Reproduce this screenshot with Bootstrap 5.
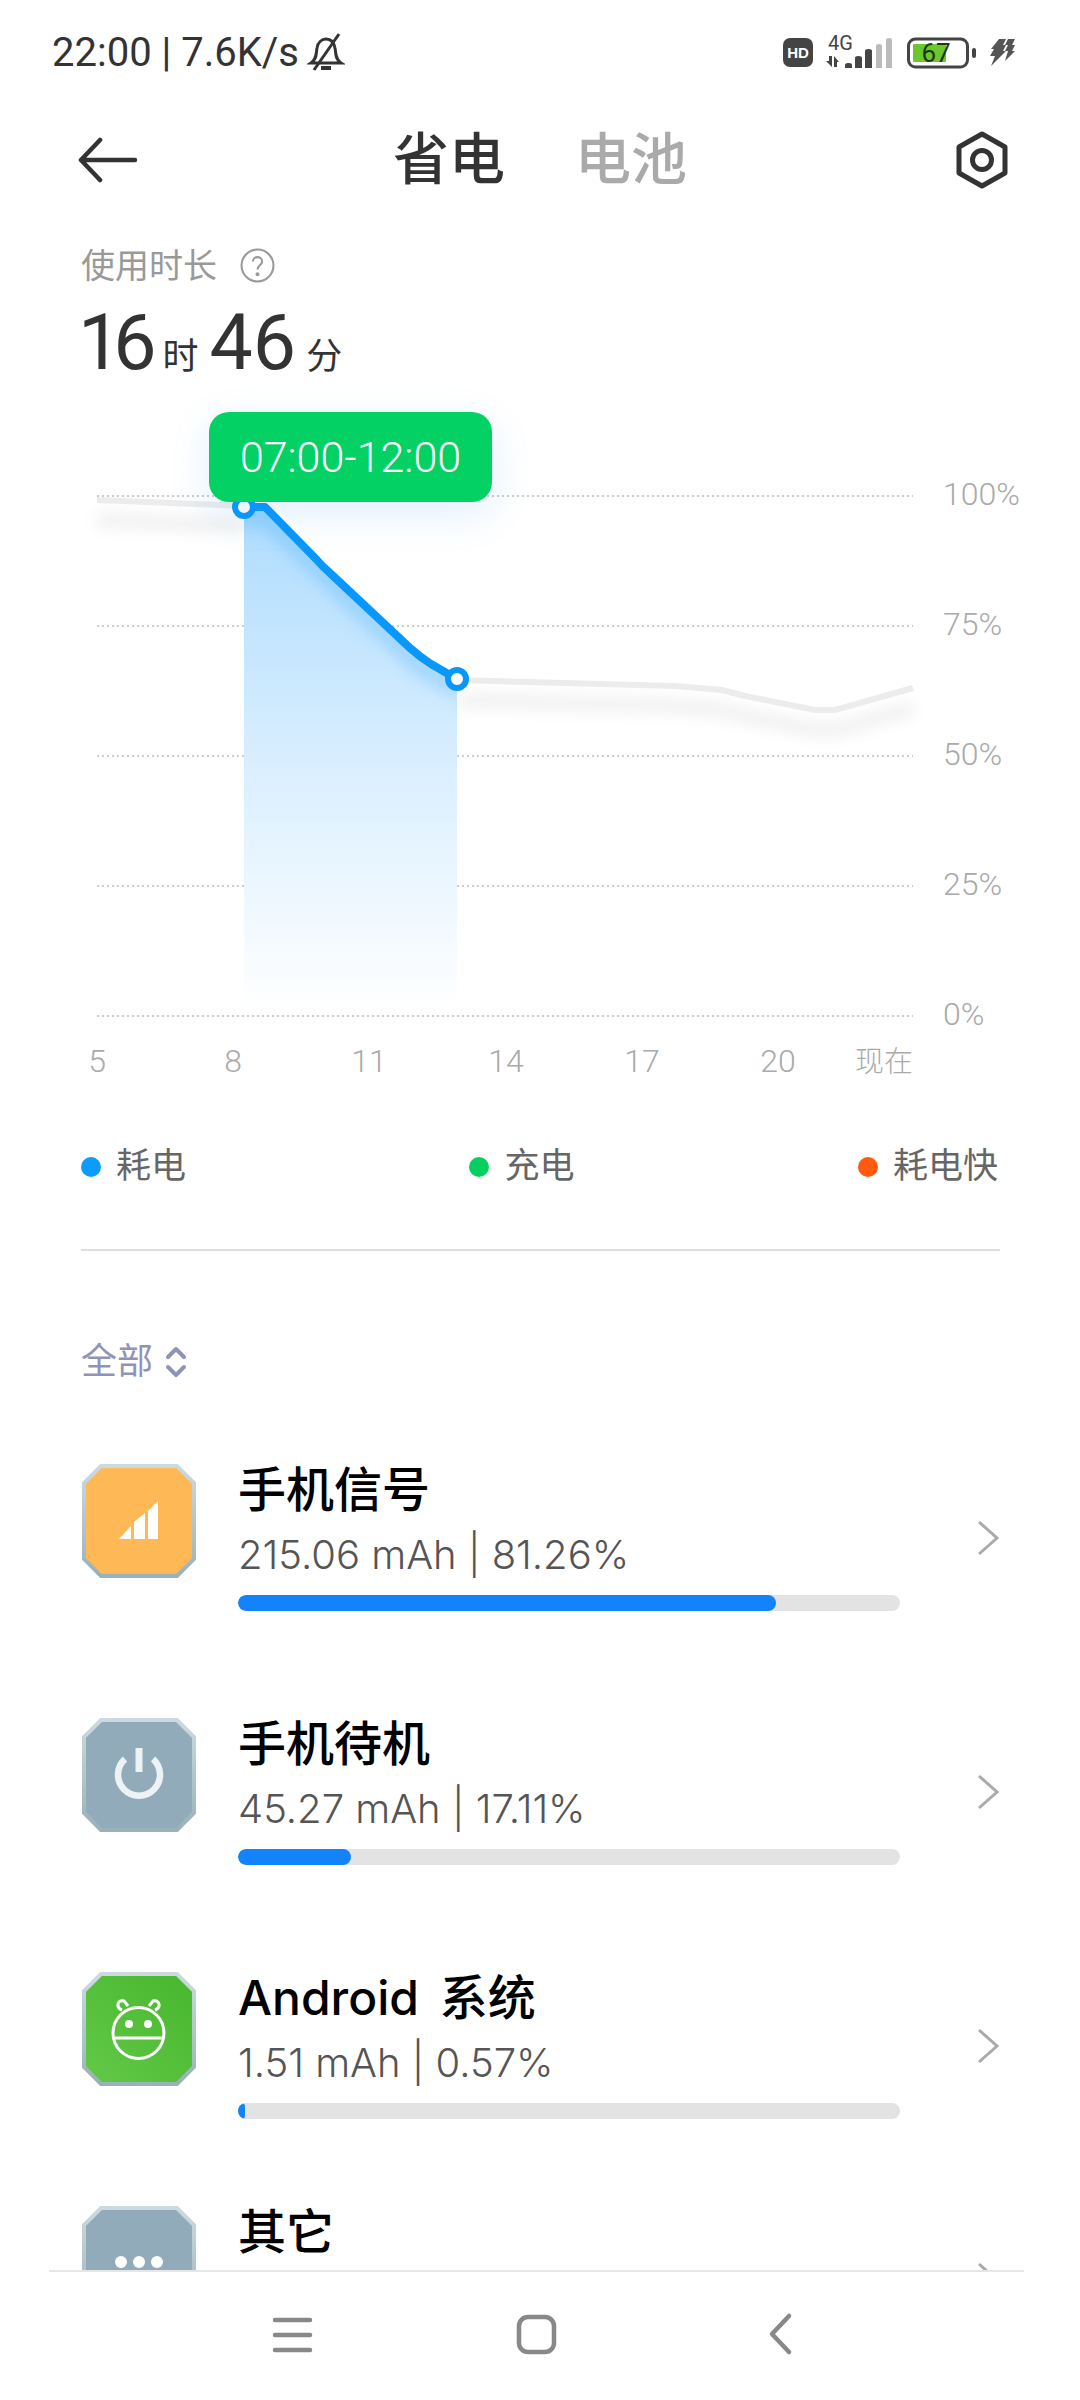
<!DOCTYPE html>
<html lang="zh">
<head>
  <meta charset="UTF-8">
  <title>省电</title>
  <meta name="viewport" content="width=device-width, initial-scale=1.0"/>
  <link href="https://cdn.jsdelivr.net/npm/bootstrap@5.3.3/dist/css/bootstrap.min.css" rel="stylesheet">
  <style>
    body { font-family: Roboto, "Noto Sans CJK SC", sans-serif; background: #fff; color: #333; }
    .phone { width: 1080px; height: 2400px; overflow: hidden; }
    .status-row { height: 105px; padding: 0 64px 0 52px; font-size: 40px; line-height: 105px; color: #333; }
    .status-icons svg { display: block; }
    .top-row { height: 110px; padding: 0 72px 0 78px; }
    .tab-on, .tab-off { font-size: 56px; font-weight: 500; line-height: 1; }
    .tab-on { color: #333; }
    .tab-off { color: #aaa; }
    .tab-gap { gap: 70px; margin-right: 14px; }
    .usage-box { padding: 0 81px; height: 185px; }
    .usage-label { font-size: 34px; color: #999; line-height: 1; padding-top: 33px; gap: 23px; }
    .usage-value { font-size: 77px; line-height: 1; color: #333; margin-top: 22px; margin-left: -3px; }
    .usage-value .unit { font-size: 36px; margin: 0 11px 0 6px; }
    .usage-value .unit-end { margin-left: 10px; }
    .tight-one { letter-spacing: -8px; margin-right: 8px; }
    .chart-box { height: 700px; }
    .chart-box svg { display: block; }
    .axis-text { font-size: 32px; font-weight: 300; fill: #aaa; font-family: Roboto, "Noto Sans CJK SC", sans-serif; }
    .tip-box { position: absolute; left: 209px; top: 12px; width: 283px; height: 90px; border-radius: 20px; background: #04d164; color: #fff; font-size: 43px; font-weight: 300; box-shadow: 0 12px 40px rgba(30, 150, 255, .14); }
    .legend-row { padding: 0 82px 0 81px; margin-top: 31px; height: 72px; font-size: 35px; color: #666; }
    .legend-dot { width: 20px; height: 20px; border-radius: 50%; margin-right: 15px; }
    .rule-line { margin: 46px 80px 0 81px; border-top: 2px solid #ddd; opacity: 1; }
    .filter-row { padding-left: 81px; margin-top: 91px; height: 40px; font-size: 36px; color: #8f93b8; gap: 12px; line-height: 40px; }
    .list-box { flex: 1 1 auto; min-height: 0; overflow: hidden; }
    .app-list { padding: 82px 0 0 82px; }
    .app-row { height: 254px; }
    .app-row.short-row { height: 234px; }
    .app-body { width: 662px; margin-left: 42px; }
    .app-name { font-family: Inter, "Noto Sans CJK SC", sans-serif; font-size: 48px; font-weight: 500; color: #000; line-height: 48px; margin-top: 2px; word-spacing: 8px; }
    .app-sub { font-family: Inter, sans-serif; font-size: 40px; font-weight: 300; color: #555; line-height: 44px; margin-top: 19px; }
    .app-bar { height: 16px; border-radius: 8px; background: #e3e3e3; margin-top: 18px; }
    .app-bar .progress-bar { background: #1283fb; border-radius: 8px; }
    .app-arrow { margin-left: 76px; margin-top: 55px; }
    .bottom-row { height: 130px; margin: 0 56px 0 49px; border-top: 2px solid #e6e6e6; background: #fff; }
  </style>
</head>
<body>
<div class="phone d-flex flex-column">

  <!-- status bar -->
  <div class="status-row d-flex justify-content-between align-items-center flex-shrink-0">
    <div class="d-flex align-items-center gap-2">
      <span>22:00 | 7.6K/s</span>
      <svg width="38" height="40" viewBox="0 0 38 40" fill="none" stroke="#333" stroke-width="3">
        <path d="M4 30 C10 26 9 20 10 15 C11 9 15 6 19 6 C24 6 27 9 28 15 C29 20 28 26 34 30 Z"/>
        <path d="M14 35 H24" stroke-width="4"/>
        <path d="M32 1 L7 37"/>
      </svg>
    </div>
    <div class="status-icons d-flex align-items-center">
      <svg width="236" height="44" viewBox="780 30 236 44">
        <rect x="783" y="37" width="30" height="29" rx="7" fill="#444"/>
        <text x="798" y="57" text-anchor="middle" font-family="Liberation Sans" font-weight="700" font-size="15" fill="#fff">HD</text>
        <text x="828" y="49" font-family="Roboto" font-size="20" fill="#444">4G</text>
        <path d="M826 60 h3 v-5 h3 v11 Z M834 55 l5 6 h-2 v5 h-3 Z" fill="#444"/>
        <path d="M845 67 v-3 q0 -2 3 -2 h1 q3 0 3 2 v3 Z M855 67 v-10 q0 -2 3.5 -2 t3.5 2 v10 Z M865 67 v-17 q0 -2 3.5 -2 t3.5 2 v17 Z" fill="#444"/>
        <path d="M876 67 v-22 q0 -2 3 -2 t3 2 v22 Z M886 67 v-28 q0 -2 3 -2 t3 2 v28 Z" fill="#bbb"/>
        <rect x="908.5" y="38" width="59" height="28" rx="7" fill="none" stroke="#444" stroke-width="3"/>
        <rect x="913" y="43" width="33" height="18" rx="1" fill="#6cc72f"/>
        <text x="936" y="61" text-anchor="middle" font-family="Roboto" font-size="26" fill="#1b3a10">67</text>
        <rect x="972" y="47" width="4" height="10" rx="2" fill="#444"/>
        <path d="M999 38 h7 l-3 6 h3 l-3 6 h3 l-15 15 l4 -10 h-5 l4 -7 h-3 Z M1008 38 h7 l-3 6 h3 l-3 6 h3 l-10 10 l3 -10 h-3 l3 -6 h-3 Z" fill="#555"/>
      </svg>
    </div>
  </div>

  <!-- header -->
  <div class="top-row d-flex justify-content-between align-items-center flex-shrink-0">
    <svg width="60" height="46" viewBox="0 0 60 46" fill="none" stroke="#333" stroke-width="4.5" stroke-linecap="round" stroke-linejoin="round">
      <path d="M22 3 L3 23 L22 43 M3 23 H57"/>
    </svg>
    <div class="d-flex tab-gap">
      <span class="tab-on">省电</span>
      <span class="tab-off">电池</span>
    </div>
    <svg width="52" height="58" viewBox="0 0 52 58" fill="none" stroke="#333" stroke-width="5" stroke-linejoin="round">
      <path d="M26 3 L49 16 V42 L26 55 L3 42 V16 Z"/>
      <circle cx="26" cy="29" r="9.5"/>
    </svg>
  </div>

  <!-- usage -->
  <div class="usage-box flex-shrink-0">
    <div class="usage-label d-flex align-items-center">
      <span>使用时长</span>
      <svg width="35" height="35" viewBox="0 0 34 34" fill="none" stroke="#999" stroke-width="2">
        <circle cx="17" cy="17" r="15.5"/>
        <path d="M12.5 13 C12.5 7.5 21.5 7.5 21.5 13 C21.5 16.5 17 16.5 17 21"/>
        <circle cx="17" cy="25.5" r="1" fill="#999"/>
      </svg>
    </div>
    <div class="usage-value"><span class="tight-one">16</span><span class="unit">时</span>46<span class="unit unit-end">分</span></div>
  </div>

  <!-- chart -->
  <div class="chart-box position-relative flex-shrink-0">
    <svg width="1080" height="700" viewBox="0 400 1080 700">
      <defs>
        <linearGradient id="areaFill" x1="0" y1="0" x2="0" y2="1">
          <stop offset="0" stop-color="#aedcfd"/>
          <stop offset=".5" stop-color="#d8eeff"/>
          <stop offset="1" stop-color="#ffffff"/>
        </linearGradient>
        <filter id="softBlur" x="-20%" y="-40%" width="140%" height="200%"><feGaussianBlur stdDeviation="7"/></filter>
        <clipPath id="areaClip"><path d="M244 507 H265 L320 563 L420 657 L457 679 V1010 H244 Z"/></clipPath>
      </defs>
      <g stroke="#ccc" stroke-width="2" stroke-dasharray="2 3">
        <path d="M97 496 H913 M97 626 H913 M97 756 H913 M97 886 H913 M97 1016 H913"/>
      </g>
      <path d="M244 507 H265 L320 563 L420 657 L457 679 V1010 H244 Z" fill="url(#areaFill)"/>
      <!-- soft shadows under the lines -->
      <path d="M97 520 L244 526 M457 700 L675 706 L722 710 L745 716 L815 730 H835 L913 708" fill="none" stroke="#000" stroke-opacity=".05" stroke-width="16" filter="url(#softBlur)"/>
      <g clip-path="url(#areaClip)">
        <path d="M244 517 H265 L320 573 L420 667 L457 689" fill="none" stroke="#5ab7fb" stroke-opacity=".35" stroke-width="18" filter="url(#softBlur)"/>
      </g>
      <path d="M97 500 L244 506 M457 680 L675 686 L722 690 L745 696 L815 710 H835 L913 688" fill="none" stroke="#ececec" stroke-width="6"/>
      <path d="M244 507 H265 L316 559 Q322 566 330 573 L410 648 Q420 657 431 664 L457 679" fill="none" stroke="#0a97fb" stroke-width="8" stroke-linejoin="round"/>
      <circle cx="244" cy="507" r="9" fill="#fff" stroke="#0a97fb" stroke-width="6"/>
      <circle cx="457" cy="679" r="9" fill="#fff" stroke="#0a97fb" stroke-width="6"/>
      <g class="axis-text">
        <text x="943" y="505">100%</text>
        <text x="943" y="635">75%</text>
        <text x="943" y="765">50%</text>
        <text x="943" y="895">25%</text>
        <text x="943" y="1025">0%</text>
        <text x="97" y="1072" text-anchor="middle">5</text>
        <text x="233" y="1072" text-anchor="middle">8</text>
        <text x="369" y="1072" text-anchor="middle">11</text>
        <text x="506" y="1072" text-anchor="middle">14</text>
        <text x="642" y="1072" text-anchor="middle">17</text>
        <text x="778" y="1072" text-anchor="middle">20</text>
        <text x="913" y="1072" text-anchor="end" font-size="29">现在</text>
      </g>
    </svg>
    <div class="tip-box d-flex align-items-center justify-content-center">07:00-12:00</div>
  </div>

  <!-- legend -->
  <div class="legend-row d-flex justify-content-between align-items-center flex-shrink-0">
    <div class="d-flex align-items-center"><span class="legend-dot" style="background:#0d9bff"></span>耗电</div>
    <div class="d-flex align-items-center"><span class="legend-dot" style="background:#05d05f"></span>充电</div>
    <div class="d-flex align-items-center"><span class="legend-dot" style="background:#ff5a10"></span>耗电快</div>
  </div>

  <hr class="rule-line flex-shrink-0">

  <div class="list-box">
    <div class="filter-row d-flex align-items-center">
      <span>全部</span>
      <svg width="22" height="32" viewBox="0 0 22 32" fill="none" stroke="#8f93b8" stroke-width="4" stroke-linecap="round" stroke-linejoin="round">
        <path d="M3 11 L11 3 L19 11 M3 21 L11 29 L19 21"/>
      </svg>
    </div>

    <div class="app-list">
      <svg width="0" height="0" class="position-absolute">
        <defs>
          <linearGradient id="ringEdge" x1="0" y1="0" x2="0" y2="1">
            <stop offset="0" stop-color="#cbdadf"/>
            <stop offset="1" stop-color="#9ab1ba"/>
          </linearGradient>
          <linearGradient id="greenFace" x1="0" y1="1" x2="1" y2="0">
            <stop offset="0" stop-color="#62c946"/>
            <stop offset="1" stop-color="#48b62f"/>
          </linearGradient>
        </defs>
      </svg>

      <div class="app-row d-flex">
        <svg width="114" height="114" viewBox="0 0 114 114" class="flex-shrink-0">
          <polygon points="19,2 95,2 112,19 112,95 95,112 19,112 2,95 2,19" fill="#ffb856" stroke="url(#ringEdge)" stroke-width="4"/>
          <path d="M37 75 L49 62 V75 Z M52 75 V58 L63 49 V75 Z M66 75 V47 L76 37 V75 Z" fill="#fff"/>
        </svg>
        <div class="app-body">
          <div class="app-name">手机信号</div>
          <div class="app-sub">215.06 mAh | 81.26%</div>
          <div class="progress app-bar"><div class="progress-bar" style="width:81.26%"></div></div>
        </div>
        <svg class="app-arrow flex-shrink-0" width="24" height="38" viewBox="0 0 24 38" fill="none" stroke="#aaa" stroke-width="3"><path d="M3 3 L21 19 L3 35"/></svg>
      </div>

      <div class="app-row d-flex">
        <svg width="114" height="114" viewBox="0 0 114 114" class="flex-shrink-0">
          <polygon points="19,2 95,2 112,19 112,95 95,112 19,112 2,95 2,19" fill="#92abbb" stroke="url(#ringEdge)" stroke-width="4"/>
          <path d="M43 41 A21 21 0 1 0 71 41" fill="none" stroke="#edf2f5" stroke-width="6.5"/>
          <path d="M57 30 V54" fill="none" stroke="#edf2f5" stroke-width="7"/>
        </svg>
        <div class="app-body">
          <div class="app-name">手机待机</div>
          <div class="app-sub">45.27 mAh | 17.11%</div>
          <div class="progress app-bar"><div class="progress-bar" style="width:17.11%"></div></div>
        </div>
        <svg class="app-arrow flex-shrink-0" width="24" height="38" viewBox="0 0 24 38" fill="none" stroke="#aaa" stroke-width="3"><path d="M3 3 L21 19 L3 35"/></svg>
      </div>

      <div class="app-row short-row d-flex">
        <svg width="114" height="114" viewBox="0 0 114 114" class="flex-shrink-0">
          <polygon points="19,2 95,2 112,19 112,95 95,112 19,112 2,95 2,19" fill="url(#greenFace)" stroke="url(#ringEdge)" stroke-width="4"/>
          <g fill="none" stroke="#fff" stroke-width="3">
            <circle cx="56.5" cy="61" r="25.5"/>
            <path d="M31 66 H82"/>
            <path d="M40 38 C33 35 36 27 42 29 L46 34 M73 38 C80 35 77 27 71 29 L67 34"/>
          </g>
          <circle cx="47" cy="52" r="4" fill="#fff"/>
          <circle cx="66" cy="52" r="4" fill="#fff"/>
        </svg>
        <div class="app-body">
          <div class="app-name">Android 系统</div>
          <div class="app-sub">1.51 mAh | 0.57%</div>
          <div class="progress app-bar"><div class="progress-bar" style="width:1.1%"></div></div>
        </div>
        <svg class="app-arrow flex-shrink-0" width="24" height="38" viewBox="0 0 24 38" fill="none" stroke="#aaa" stroke-width="3"><path d="M3 3 L21 19 L3 35"/></svg>
      </div>

      <div class="app-row d-flex">
        <svg width="114" height="114" viewBox="0 0 114 114" class="flex-shrink-0">
          <polygon points="19,2 95,2 112,19 112,95 95,112 19,112 2,95 2,19" fill="#92abbb" stroke="url(#ringEdge)" stroke-width="4"/>
          <circle cx="39" cy="56" r="6" fill="#fff"/>
          <circle cx="57" cy="56" r="6" fill="#fff"/>
          <circle cx="75" cy="56" r="6" fill="#fff"/>
        </svg>
        <div class="app-body">
          <div class="app-name">其它</div>
        </div>
        <svg class="app-arrow flex-shrink-0" width="24" height="38" viewBox="0 0 24 38" fill="none" stroke="#aaa" stroke-width="3"><path d="M3 3 L21 19 L3 35"/></svg>
      </div>
    </div>
  </div>

  <!-- bottom nav -->
  <div class="bottom-row d-flex flex-shrink-0 position-relative">
    <svg width="975" height="128" viewBox="49 2272 975 128" fill="none" stroke="#888" stroke-width="4.5" stroke-linecap="round" stroke-linejoin="round">
      <path d="M275 2320 H310 M275 2335 H310 M275 2350 H310"/>
      <rect x="519" y="2317" width="35" height="35" rx="9"/>
      <path d="M789 2316 L772 2334 L789 2352"/>
    </svg>
  </div>
</div>
<script src="https://cdn.jsdelivr.net/npm/bootstrap@5.3.3/dist/js/bootstrap.bundle.min.js"></script>
</body>
</html>
